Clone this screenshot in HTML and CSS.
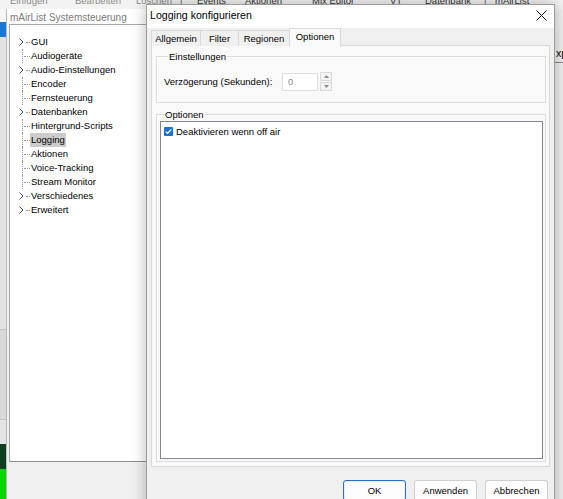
FILE: index.html
```html
<!DOCTYPE html>
<html lang="de">
<head>
    <meta charset="UTF-8">
    <title>Logging konfigurieren</title>
    <link rel="stylesheet" href="styles.css">
</head>
<body>
    <div class="menubar">
        <span class="off">Einfügen</span>
        <span class="off">Bearbeiten</span>
        <span class="off">Löschen</span>
        <span class="sep">|</span>
        <span>Events</span>
        <span>Aktionen</span>
        <span>Mix Editor</span>
        <span>VT</span>
        <span>Datenbank</span>
        <span class="sep">|</span>
        <span>mAirList</span>
    </div>

    <div class="strip">
        <div class="strip-light"></div>
        <div class="strip-blue"></div>
        <div class="strip-gray"></div>
        <div class="strip-mid"></div>
        <div class="strip-pale"></div>
        <div class="strip-dark"></div>
        <div class="strip-green"></div>
    </div>

    <!-- window behind the dialog -->
    <div class="syswin">
        <div class="syswin-title">mAirList Systemsteuerung</div>
        <ul class="tree">
            <li class="node parent"><span class="twig"><svg width="5" height="8" viewBox="0 0 5 8"><polyline points="0.5,0.5 4,4 0.5,7.5" /></svg></span><span class="label">GUI</span></li>
            <li class="node"><span class="twig"></span><span class="label">Audiogeräte</span></li>
            <li class="node parent"><span class="twig"><svg width="5" height="8" viewBox="0 0 5 8"><polyline points="0.5,0.5 4,4 0.5,7.5" /></svg></span><span class="label">Audio-Einstellungen</span></li>
            <li class="node"><span class="twig"></span><span class="label">Encoder</span></li>
            <li class="node"><span class="twig"></span><span class="label">Fernsteuerung</span></li>
            <li class="node parent"><span class="twig"><svg width="5" height="8" viewBox="0 0 5 8"><polyline points="0.5,0.5 4,4 0.5,7.5" /></svg></span><span class="label">Datenbanken</span></li>
            <li class="node"><span class="twig"></span><span class="label">Hintergrund-Scripts</span></li>
            <li class="node"><span class="twig"></span><span class="label selected">Logging</span></li>
            <li class="node"><span class="twig"></span><span class="label">Aktionen</span></li>
            <li class="node"><span class="twig"></span><span class="label">Voice-Tracking</span></li>
            <li class="node"><span class="twig"></span><span class="label">Stream Monitor</span></li>
            <li class="node parent"><span class="twig"><svg width="5" height="8" viewBox="0 0 5 8"><polyline points="0.5,0.5 4,4 0.5,7.5" /></svg></span><span class="label">Verschiedenes</span></li>
            <li class="node parent"><span class="twig"><svg width="5" height="8" viewBox="0 0 5 8"><polyline points="0.5,0.5 4,4 0.5,7.5" /></svg></span><span class="label">Erweitert</span></li>
        </ul>
    </div>

    <div class="backwin">
        <div class="backwin-top"></div>
        <div class="backwin-bar">xp</div>
    </div>

    <!-- dialog -->
    <div class="dialog">
        <div class="dialog-title">
            <span>Logging konfigurieren</span>
            <svg class="close" width="11" height="11" viewBox="0 0 11 11"><path d="M0.5 0.5L10.5 10.5M10.5 0.5L0.5 10.5" /></svg>
        </div>
        <div class="dialog-body">
            <div class="tabs">
                <div class="tab tab-allgemein">Allgemein</div>
                <div class="tab tab-filter">Filter</div>
                <div class="tab tab-regionen">Regionen</div>
                <div class="tab active">Optionen</div>
            </div>
            <div class="tab-page">
                <fieldset class="group">
                    <legend>Einstellungen</legend>
                    <div class="row">
                        <label class="field-label">Verzögerung (Sekunden):</label>
                        <div class="spin">
                            <div class="spin-value">0</div>
                            <div class="spin-buttons">
                                <div class="spin-btn"><svg width="5" height="3" viewBox="0 0 5 3"><polygon points="0,3 2.5,0 5,3" /></svg></div>
                                <div class="spin-btn"><svg width="5" height="3" viewBox="0 0 5 3"><polygon points="0,0 2.5,3 5,0" /></svg></div>
                            </div>
                        </div>
                    </div>
                </fieldset>
                <fieldset class="group group-fill">
                    <legend>Optionen</legend>
                    <div class="listbox">
                        <div class="check-item">
                            <span class="checkbox"><svg width="9" height="9" viewBox="0 0 9 9"><polyline points="1.8,4.6 3.6,6.4 7.3,2.4" /></svg></span>
                            <span>Deaktivieren wenn off air</span>
                        </div>
                    </div>
                </fieldset>
            </div>
            <div class="buttons">
                <button class="btn default">OK</button>
                <button class="btn">Anwenden</button>
                <button class="btn">Abbrechen</button>
            </div>
        </div>
    </div>
</body>
</html>
```

FILE: styles.css
```css
html, body {
    margin: 0;
    padding: 0;
    height: 100%;
}
body {
    position: relative;
    width: 563px;
    height: 499px;
    overflow: hidden;
    background: #f0f0f0;
    font-family: "Liberation Sans", Arial, sans-serif;
    font-size: 9.5px;
    color: #000;
}

/* app menu, only the lower edge is visible */
.menubar {
    height: 9px;
    overflow: hidden;
    display: grid;
    grid-template-columns: 65px 61px 44px 17px 48px 67px 78px 35px 59px 11px auto;
    padding-left: 10px;
    background: #f3f3f3;
    font-size: 9.5px;
    line-height: 11px;
    color: #333;
}
.menubar span { margin-top: -5px; white-space: nowrap; }
.menubar .off { color: #8a8a8a; }
.menubar .sep { color: #555; }

/* edge of the main app */
.strip {
    position: absolute;
    left: 0;
    top: 9px;
    width: 6px;
    bottom: 0;
    display: flex;
    flex-direction: column;
}
.strip-light { height: 13px; background: #f7f7f7; }
.strip-blue { height: 15px; background: #1976d2; }
.strip-gray { height: 292px; background: #e2e2e2; border-bottom: 1px solid #c4c4c4; }
.strip-mid { height: 89px; background: #d8d8d8; border-bottom: 1px solid #c4c4c4; }
.strip-pale { height: 24px; background: #e4e4e4; }
.strip-dark { height: 25px; background: #0f3d22; }
.strip-green { flex: 1; background: #0ad40a; }

.syswin {
    position: absolute;
    left: 6px;
    top: 9px;
    width: 170px;
    bottom: 0;
    background: #f0f0f0;
    border-left: 1px solid #b9b9b9;
}
.syswin-title {
    height: 15px;
    background: #fff;
    padding-left: 3px;
    font-size: 10px;
    line-height: 18px;
    color: #7a7a7a;
}
.tree {
    list-style: none;
    margin: 0 0 0 2px;
    padding: 10px 0 0 0;
    height: 426px;
    background: #fff;
    border: 1px solid #a8a8a8;
    border-bottom-color: #8d8d8d;
}
.node {
    display: flex;
    height: 14px;
    line-height: 14px;
}
.twig {
    position: relative;
    width: 21px;
    flex: none;
}
.node:not(.parent) .twig::before {
    content: "";
    position: absolute;
    left: 12px;
    top: 0;
    bottom: 0;
    border-left: 1px dotted #9a9a9a;
}
.twig::after {
    content: "";
    position: absolute;
    left: 14px;
    width: 6px;
    top: 7px;
    border-top: 1px dotted #9a9a9a;
}
.parent .twig::after { left: 16px; width: 4px; }
.twig svg {
    position: absolute;
    left: 9px;
    top: 3px;
    fill: none;
    stroke: #555;
    stroke-width: 1;
}
.label { padding: 0 1px; margin-left: -1px; }
.label.selected { background: #cccccc; }

.backwin {
    position: absolute;
    left: 555px;
    top: 9px;
    right: 0;
    bottom: 0;
    background: #f0f0f0;
}
.backwin-top { height: 34px; }
.backwin-bar {
    height: 19px;
    border-bottom: 1px solid #8a8a8a;
    padding-left: 1px;
    font-size: 10.5px;
    line-height: 20px;
}

.dialog {
    position: absolute;
    left: 146px;
    top: 4px;
    width: 407px;
    height: 510px;
    background: #f0f0f0;
    border: 1px solid #9c9c9c;
    box-shadow: 0 0 14px rgba(0, 0, 0, 0.28);
}
.dialog-title {
    height: 23px;
    background: #fff;
    display: flex;
    align-items: center;
    justify-content: space-between;
    padding: 0 7px 0 3px;
    font-size: 10.6px;
}
.dialog-title span { margin-top: -3px; }
.close {
    margin-top: -2px;
    fill: none;
    stroke: #111;
    stroke-width: 1;
}
.dialog-body { padding: 0 4px; }

.tabs {
    display: flex;
    height: 17px;
    position: relative;
    z-index: 1;
}
.tab {
    margin-top: 2px;
    height: 15px;
    line-height: 15px;
    text-align: center;
    border: 1px solid #d9d9d9;
    border-bottom: none;
    margin-right: -1px;
    background: #f0f0f0;
}
.tab-allgemein { width: 48px; }
.tab-filter { width: 37px; }
.tab-regionen { width: 50px; }
.tab.active {
    width: 50px;
    margin-top: 0;
    height: 18px;
    line-height: 16px;
    background: #f9f9f9;
}
.tab-page {
    height: 412px;
    background: #f9f9f9;
    border: 1px solid #d9d9d9;
    padding: 4px 3px 4px 4px;
    display: flex;
    flex-direction: column;
}

.group {
    margin: 0;
    border: 1px solid #dcdcdc;
    box-shadow: inset 1px 1px 0 #fff;
    padding: 10px 6px 11px 7px;
    min-width: 0;
}
.group legend {
    position: relative;
    top: 1px;
    margin-left: 4px;
    padding: 0 1px;
    line-height: 12px;
}
.group-fill {
    flex: 1;
    margin-top: 5px;
    padding: 1px 2px 2px 3px;
    display: flex;
    flex-direction: column;
}

.row {
    display: flex;
    align-items: center;
}
.field-label { width: 118px; }
.spin {
    display: flex;
    align-items: center;
    gap: 2px;
}
.spin-value {
    width: 29px;
    height: 16px;
    line-height: 16px;
    padding-left: 5px;
    background: #fff;
    border: 1px solid #dedede;
    color: #8c8c8c;
}
.spin-buttons {
    display: flex;
    flex-direction: column;
    gap: 1px;
}
.spin-btn {
    width: 10px;
    height: 7px;
    border: 1px solid #dadada;
    background: #f4f4f4;
    display: flex;
    align-items: center;
    justify-content: center;
}
.spin-btn svg { fill: #8a8a8a; }

.listbox {
    flex: 1;
    background: #fff;
    border: 1px solid #828790;
    padding: 3px 0 0 3px;
}
.check-item {
    display: flex;
    align-items: center;
    gap: 3px;
    height: 12px;
}
.checkbox {
    width: 9px;
    height: 9px;
    background: #1b6fd1;
    border-radius: 1px;
    display: flex;
}
.checkbox svg {
    fill: none;
    stroke: #fff;
    stroke-width: 1.3;
}

.buttons {
    display: flex;
    justify-content: flex-end;
    gap: 8px;
    padding: 13px 2px 0 0;
}
.btn {
    width: 63px;
    height: 21px;
    padding: 0;
    font-family: "Liberation Sans", Arial, sans-serif;
    font-size: 9.5px;
    color: #000;
    background: #fdfdfd;
    border: 1px solid #d0d0d0;
    border-bottom-color: #bdbdbd;
    border-radius: 3px;
}
.btn.default {
    border: 1px solid #2a6fc0;
    box-shadow: inset 0 0 0 1px #e5eefa;
}
```
